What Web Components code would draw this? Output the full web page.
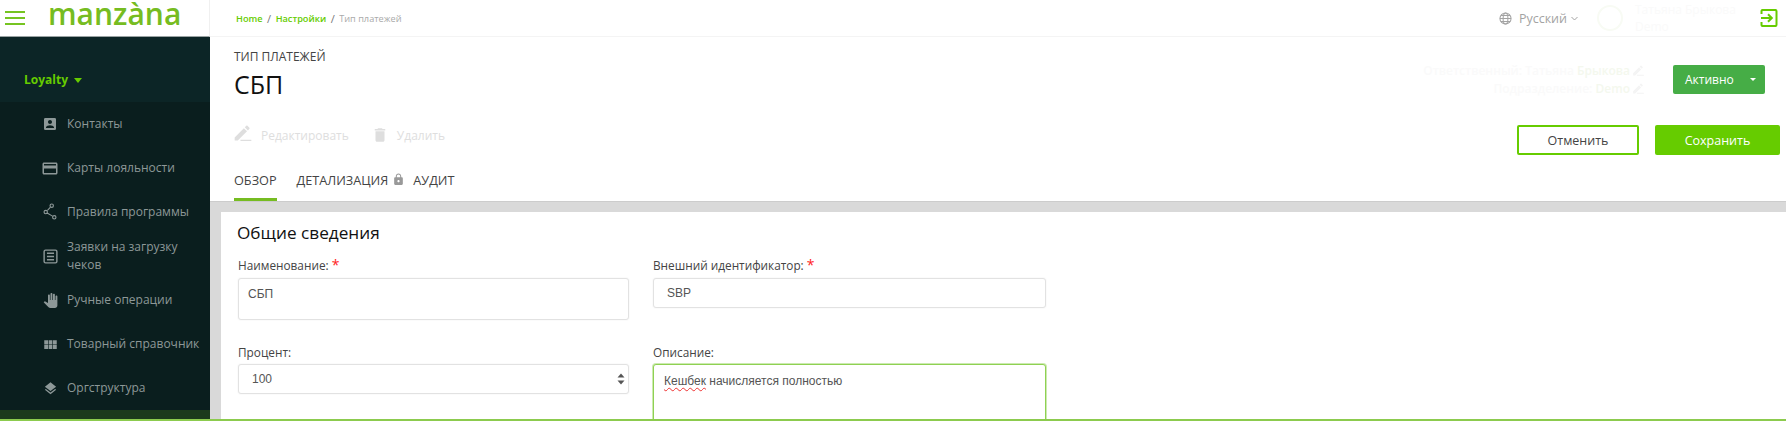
<!DOCTYPE html>
<html lang="ru">
<head>
<meta charset="utf-8">
<title>Тип платежей</title>
<style>
  html, body { margin: 0; height: 100%; overflow: hidden; background: #fff; }
  body { font-family: "Open Sans", "Liberation Sans", sans-serif; }
</style>
</head>
<body>
<app-shell>
  <side-nav slot="side">
    <nav-item icon="contact" size="16">Контакты</nav-item>
    <nav-item icon="card" size="19">Карты лояльности</nav-item>
    <nav-item icon="graph" size="18">Правила программы</nav-item>
    <nav-item icon="list" size="17">Заявки на загрузку чеков</nav-item>
    <nav-item icon="hand" size="15">Ручные операции</nav-item>
    <nav-item icon="grid" size="15">Товарный справочник</nav-item>
    <nav-item icon="layers" size="15">Оргструктура</nav-item>
  </side-nav>
  <top-bar></top-bar>
  <page-header></page-header>
  <tab-strip></tab-strip>
  <form-card></form-card>
</app-shell>

<script>
const ICONS = {
  contact: "M3 5v14a2 2 0 0 0 2 2h14a2 2 0 0 0 2-2V5a2 2 0 0 0-2-2H5a2 2 0 0 0-2 2zm12 4c0 1.66-1.34 3-3 3s-3-1.34-3-3 1.34-3 3-3 3 1.34 3 3zm-9 8c0-2 4-3.1 6-3.1s6 1.1 6 3.1v1H6v-1z",
  card: "M20 4H4c-1.11 0-1.99.89-1.99 2L2 18c0 1.11.89 2 2 2h16c1.11 0 2-.89 2-2V6c0-1.11-.89-2-2-2zm0 14H4v-6h16v6zm0-10H4V6h16v2z",
  graph: "M3.300 12a3 3 0 1 0 6 0a3 3 0 1 0-6 0zM4.800 12a1.500 1.500 0 1 1 3 0a1.500 1.500 0 1 1-3 0zM11.300 3.600a3 3 0 1 0 6 0a3 3 0 1 0-6 0zM12.800 3.600a1.500 1.500 0 1 1 3 0a1.500 1.500 0 1 1-3 0zM14.700 19a3 3 0 1 0 6 0a3 3 0 1 0-6 0zM16.200 19a1.500 1.500 0 1 1 3 0a1.500 1.500 0 1 1-3 0zM7.800 9.500l4-4.200 1 1-4 4.200zM8.400 14.200l.7-1.200 6.600 3.900-.7 1.200z",
  list: "M5 2h14a3 3 0 0 1 3 3v14a3 3 0 0 1-3 3H5a3 3 0 0 1-3-3V5a3 3 0 0 1 3-3zm0 2a1 1 0 0 0-1 1v14a1 1 0 0 0 1 1h14a1 1 0 0 0 1-1V5a1 1 0 0 0-1-1H5zm2 2.500h10v2H7v-2zm0 4.500h10v2H7v-2zm0 4.500h10v2H7v-2z",
  hand: "M23 5.500V20c0 2.200-1.800 4-4 4h-7.300c-1.080 0-2.100-.43-2.850-1.190L1 14.830s1.260-1.230 1.300-1.250c.22-.19.49-.29.79-.29.22 0 .42.06.6.16.04.01 4.310 2.460 4.310 2.460V4c0-.83.67-1.500 1.500-1.500S11 3.170 11 4v7h1V1.500c0-.83.67-1.500 1.500-1.500S15 .67 15 1.500V11h1V2.500c0-.83.67-1.500 1.500-1.500s1.500.67 1.500 1.500V11h1V5.500c0-.83.67-1.500 1.500-1.500s1.500.67 1.500 1.500z",
  grid: "M2 5h6v6.500H2V5zm7 0h6v6.500H9V5zm7 0h6v6.500h-6V5zM2 12.500h6V19H2v-6.500zm7 0h6V19H9v-6.500zm7 0h6V19h-6v-6.500z",
  layers: "M11.990 18.540l-7.370-5.730L3 14.070l9 7 9-7-1.630-1.270-7.380 5.740zM12 16l7.360-5.730L21 9l-9-7-9 7 1.630 1.270L12 16z",
  edit: "M2 17.250V21h3.750L16.810 9.940l-3.750-3.750L2 17.250zM19.710 7.040c.39-.39.39-1.020 0-1.410l-2.340-2.340c-.39-.39-1.020-.39-1.410 0l-1.830 1.830 3.750 3.750 1.830-1.830zM9 20h13v1.500H9z",
  trash: "M6 19c0 1.100.9 2 2 2h8c1.100 0 2-.9 2-2V7H6v12zM19 4h-3.500l-1-1h-5l-1 1H5v2h14V4z",
  lock: "M18 8h-1V6c0-2.760-2.240-5-5-5S7 3.240 7 6v2H6c-1.100 0-2 .9-2 2v10c0 1.100.9 2 2 2h12c1.100 0 2-.9 2-2V10c0-1.100-.9-2-2-2zm-6 9c-1.100 0-2-.9-2-2s.9-2 2-2 2 .9 2 2-.9 2-2 2zm3.100-9H8.900V6c0-1.710 1.390-3.100 3.100-3.100 1.710 0 3.100 1.390 3.100 3.100v2z"
};

const icon = (name, size, color) =>
  `<svg width="${size}" height="${size}" viewBox="0 0 24 24" fill="${color}" aria-hidden="true"><path d="${ICONS[name]}"/></svg>`;

class AppShell extends HTMLElement {
  constructor() {
    super();
    this.attachShadow({ mode: "open" });
  }

  connectedCallback() {
    this.shadowRoot.innerHTML = `
      <style>
        :host {
          display: grid;
          grid-template-columns: 210px 1fr;
          grid-template-rows: 1fr 2px;
          height: 421px;
          overflow: hidden;
          font-family: "Open Sans", "Liberation Sans", sans-serif;
        }
        .side { grid-row: 1; min-height: 0; overflow: hidden; }
        .main { grid-row: 1; min-height: 0; min-width: 0; overflow: hidden; display: flex; flex-direction: column; }
        .rule { grid-column: 1 / -1; background: #8ccb4e; }
      </style>
      <div class="side"><slot name="side"></slot></div>
      <div class="main"><slot></slot></div>
      <div class="rule"></div>
    `;
  }
}

class SideNav extends HTMLElement {
  constructor() {
    super();
    this.attachShadow({ mode: "open" });
  }

  connectedCallback() {
    this.shadowRoot.innerHTML = `
      <style>
        :host { display: block; height: 100%; background: #0a1e1e; overflow: hidden; }
        .brand {
          height: 36px;
          display: flex;
          align-items: center;
          background: #fff;
          border-bottom: 1px solid #9aa3a3;
          border-right: 1px solid #f0f0f0;
        }
        .burger { width: 20px; margin-left: 5px; display: flex; flex-direction: column; gap: 4px; }
        .burger i { display: block; height: 2px; background: #76c421; }
        .logo {
          margin-left: 23px;
          padding-bottom: 8px;
          font-size: 30px;
          font-weight: 600;
          line-height: 24px;
          color: #76bc21;
        }
        .module {
          height: 65px;
          box-sizing: border-box;
          padding: 20px 0 0 24px;
          background: #0c2526;
          display: flex;
          align-items: center;
          gap: 6px;
          color: #66cc00;
          font-size: 12px;
          font-weight: 700;
        }
        .module b { width: 0; height: 0; margin-top: 2px; border: 4.5px solid transparent; border-top: 5px solid #66cc00; border-bottom: 0; }
        .active { height: 12px; background: #1c3a1c; }
      </style>
      <div class="brand">
        <div class="burger"><i></i><i></i><i></i></div>
        <div class="logo">manzàna</div>
      </div>
      <div class="module">Loyalty<b></b></div>
      <slot></slot>
      <div class="active"></div>
    `;
  }
}

class NavItem extends HTMLElement {
  constructor() {
    super();
    this.attachShadow({ mode: "open" });
  }

  connectedCallback() {
    this.shadowRoot.innerHTML = `
      <style>
        :host {
          display: flex;
          align-items: center;
          height: 44px;
          padding-left: 41px;
          gap: 8px;
          color: #8d9898;
          font-size: 12px;
          line-height: 18px;
        }
        .glyph { flex: none; width: 18px; display: flex; justify-content: center; }
        .label { width: 138px; }
      </style>
      <div class="glyph">${icon(this.getAttribute("icon"), this.getAttribute("size"), "#8d9898")}</div>
      <div class="label"><slot></slot></div>
    `;
  }
}

class TopBar extends HTMLElement {
  constructor() {
    super();
    this.attachShadow({ mode: "open" });
  }

  connectedCallback() {
    this.shadowRoot.innerHTML = `
      <style>
        :host {
          display: flex;
          flex: none;
          align-items: center;
          height: 36px;
          border-bottom: 1px solid #f4f4f4;
          padding: 0 8px 0 26px;
        }
        .crumbs { font-size: 9.2px; font-weight: 600; color: #66cc00; display: flex; gap: 4.5px; align-items: center; }
        .crumbs span { color: #777; font-weight: 400; font-size: 11px; }
        .crumbs em { font-style: normal; font-weight: 400; color: #aaa; }
        .right { margin-left: auto; display: flex; align-items: center; }
        .lang { display: flex; align-items: center; gap: 7px; font-size: 12.5px; color: #a3a3a3; }
        .chev { margin-left: -3px; }
        .ghost { width: 26px; height: 26px; box-sizing: border-box; margin: 0 12px 0 19px; border: 2px solid #f8fbf4; border-radius: 50%; }
        .who { width: 125px; font-size: 12px; line-height: 17px; color: #fafafa; }
        .logout { display: block; }
      </style>
      <div class="crumbs">Home <span>/</span> Настройки <span>/</span> <em>Тип платежей</em></div>
      <div class="right">
        <div class="lang">
          <svg width="13" height="13" viewBox="0 0 14 14" fill="none" stroke="#a3a3a3" stroke-width="1.1"><circle cx="7" cy="7" r="6"/><ellipse cx="7" cy="7" rx="2.6" ry="6"/><path d="M1 7h12M2 3.7h10M2 10.3h10"/></svg>
          <span>Русский</span>
          <svg class="chev" width="7" height="5" viewBox="0 0 7 5" fill="none" stroke="#a3a3a3"><path d="M.5 1l3 3 3-3"/></svg>
        </div>
        <div class="ghost"></div>
        <div class="who">Татьяна Брыкова<br>Demo</div>
        <svg class="logout" width="18" height="18" viewBox="0 0 18 18" fill="none" stroke="#66cc00" stroke-width="2"><path d="M1.5 5V2.3q0-1.400 1.400-1.400h12.200q1.400 0 1.400 1.400v13.400q0 1.400-1.400 1.400H2.900q-1.400 0-1.400-1.400V13"/><path d="M1 9h10M8 5.200L11.800 9 8 12.800"/></svg>
      </div>
    `;
  }
}

class PageHeader extends HTMLElement {
  constructor() {
    super();
    this.attachShadow({ mode: "open" });
  }

  connectedCallback() {
    const pencil = icon("edit", 13, "#f4f4f4");
    this.shadowRoot.innerHTML = `
      <style>
        :host {
          display: flex;
          flex: none;
          justify-content: space-between;
          height: 118px;
          padding: 0 6px 0 24px;
          color: #333;
        }
        .eyebrow { margin-top: 11px; font-size: 12px; line-height: 17px; color: #444; }
        h1 { margin: 3px 0 0; font-size: 25px; line-height: 33px; font-weight: 400; color: #111; }
        .tools { display: flex; align-items: center; margin-top: 22px; font-size: 12px; color: #dedede; }
        .tools svg { flex: none; }
        .tools .edit { margin-left: -1px; }
        .tools span { margin-left: 8px; margin-right: 22px; }
        .right { display: flex; flex-direction: column; align-items: flex-end; }
        .status-row { display: flex; align-items: center; margin-top: 24.5px; margin-right: 15px; }
        .owner { margin-right: 28px; font-size: 12px; font-weight: 600; line-height: 18px; text-align: right; color: #fafafa; }
        .owner span { color: #f4f8ee; }
        .owner svg { vertical-align: -2px; margin-left: 2px; }
        .status {
          display: flex;
          align-items: center;
          width: 92px;
          height: 29px;
          box-sizing: border-box;
          padding-left: 12px;
          background: #46ad46;
          border-radius: 2px;
          color: #fff;
          font-size: 12px;
        }
        .status b { margin-left: 16px; border: 3.5px solid transparent; border-top: 3.5px solid #fff; border-bottom: 0; }
        .actions { display: flex; gap: 16px; margin-top: 27.5px; }
        button {
          height: 30px;
          border-radius: 2px;
          font: 12.5px "Open Sans", "Liberation Sans", sans-serif;
          padding: 0;
        }
        .cancel { width: 122px; background: #fff; border: 2px solid #66cc00; color: #444; }
        .save { width: 125px; background: #66cc00; border: 0; color: #fff; }
      </style>
      <div>
        <div class="eyebrow">ТИП ПЛАТЕЖЕЙ</div>
        <h1>СБП</h1>
        <div class="tools">
          <div class="edit">${icon("edit", 20, "#dedede")}</div><span>Редактировать</span>
          ${icon("trash", 18, "#dedede")}<span>Удалить</span>
        </div>
      </div>
      <div class="right">
        <div class="status-row">
          <div class="owner">Ответственный: Татьяна <span>Брыкова</span>${pencil}<br>Подразделение: <span>Demo</span>${pencil}</div>
          <div class="status">Активно<b></b></div>
        </div>
        <div class="actions">
          <button class="cancel">Отменить</button>
          <button class="save">Сохранить</button>
        </div>
      </div>
    `;
  }
}

class TabStrip extends HTMLElement {
  constructor() {
    super();
    this.attachShadow({ mode: "open" });
  }

  connectedCallback() {
    this.shadowRoot.innerHTML = `
      <style>
        :host {
          display: flex;
          flex: none;
          align-items: stretch;
          height: 47px;
          padding-left: 24px;
          font-size: 12.7px;
          color: #444;
          border-bottom: 1px solid #ccc;
          box-sizing: border-box;
        }
        .tab { display: flex; align-items: center; box-sizing: border-box; padding-top: 6px; border-bottom: 3px solid transparent; }
        .on { border-bottom-color: #76bc21; margin-right: 20px; }
        svg { margin: 0 8px 0 4px; }
      </style>
      <div class="tab on">ОБЗОР</div>
      <div class="tab">ДЕТАЛИЗАЦИЯ ${icon("lock", 13, "#999")}</div>
      <div class="tab">АУДИТ</div>
    `;
  }
}

class FormField extends HTMLElement {
  constructor() {
    super();
    this.attachShadow({ mode: "open" });
  }

  connectedCallback() {
    const required = this.hasAttribute("required") ? `<em>*</em>` : "";
    const spinner = this.hasAttribute("spinner")
      ? `<svg class="spin" width="8" height="14" viewBox="0 0 8 14" fill="#555"><path d="M4 1.5l3.500 4H.5zM4 12.500l-3.500-4h7z"/></svg>`
      : "";
    this.shadowRoot.innerHTML = `
      <style>
        :host { display: block; min-width: 0; }
        label { display: block; font-size: 11.8px; line-height: 18px; color: #444; margin-bottom: var(--label-gap, 4px); }
        em { font-style: normal; color: #f22; font-size: 14px; }
        .box {
          display: flex;
          align-items: flex-start;
          box-sizing: border-box;
          height: var(--box-height, 30px);
          padding: var(--box-pad, 6.5px 13px);
          border: 1px solid #e2e2e2;
          border-radius: 3px;
          box-shadow: 0 0 2px #eee;
          font: 12px/15px "Liberation Sans", Arial, sans-serif;
          color: #555;
          background: #fff;
        }
        .spin { margin-left: auto; margin-right: -10px; }
        :host([focused]) .box { border-color: #8fd152; box-shadow: 0 0 0 1px rgba(143, 209, 82, .45); }
        ::slotted(u) { text-decoration: underline wavy #e33 1px; text-underline-offset: 2px; }
      </style>
      <label>${this.getAttribute("label")} ${required}</label>
      <div class="box"><div><slot></slot></div>${spinner}</div>
    `;
  }
}

class FormCard extends HTMLElement {
  constructor() {
    super();
    this.attachShadow({ mode: "open" });
  }

  connectedCallback() {
    this.shadowRoot.innerHTML = `
      <style>
        :host {
          display: block;
          flex: 1;
          min-height: 0;
          overflow: hidden;
          background: #d9d9d9;
          padding: 10px 0 0 11px;
        }
        .card { height: 100%; background: #fff; padding: 8px 0 0 17px; box-sizing: border-box; }
        h2 { margin: 0 0 10px -1px; font-size: 17.2px; line-height: 26px; font-weight: 400; color: #111; }
        .grid { display: grid; grid-template-columns: 391px 393px; column-gap: 24px; row-gap: 23px; align-items: start; }
        .tall { --box-height: 42px; --box-pad: 8px 9px; }
        .wide { --box-pad: 9px 10px; --box-height: 70px; --label-gap: 3px; }
        .tight { --label-gap: 3px; }
      </style>
      <div class="card">
        <h2>Общие сведения</h2>
        <div class="grid">
          <form-field class="tall" label="Наименование:" required>СБП</form-field>
          <form-field label="Внешний идентификатор:" required>SBP</form-field>
          <form-field class="tight" label="Процент:" spinner>100</form-field>
          <form-field class="wide" label="Описание:" focused><u>Кешбек</u> начисляется полностью</form-field>
        </div>
      </div>
    `;
  }
}

customElements.define("app-shell", AppShell);
customElements.define("side-nav", SideNav);
customElements.define("nav-item", NavItem);
customElements.define("top-bar", TopBar);
customElements.define("page-header", PageHeader);
customElements.define("tab-strip", TabStrip);
customElements.define("form-field", FormField);
customElements.define("form-card", FormCard);
</script>
</body>
</html>
